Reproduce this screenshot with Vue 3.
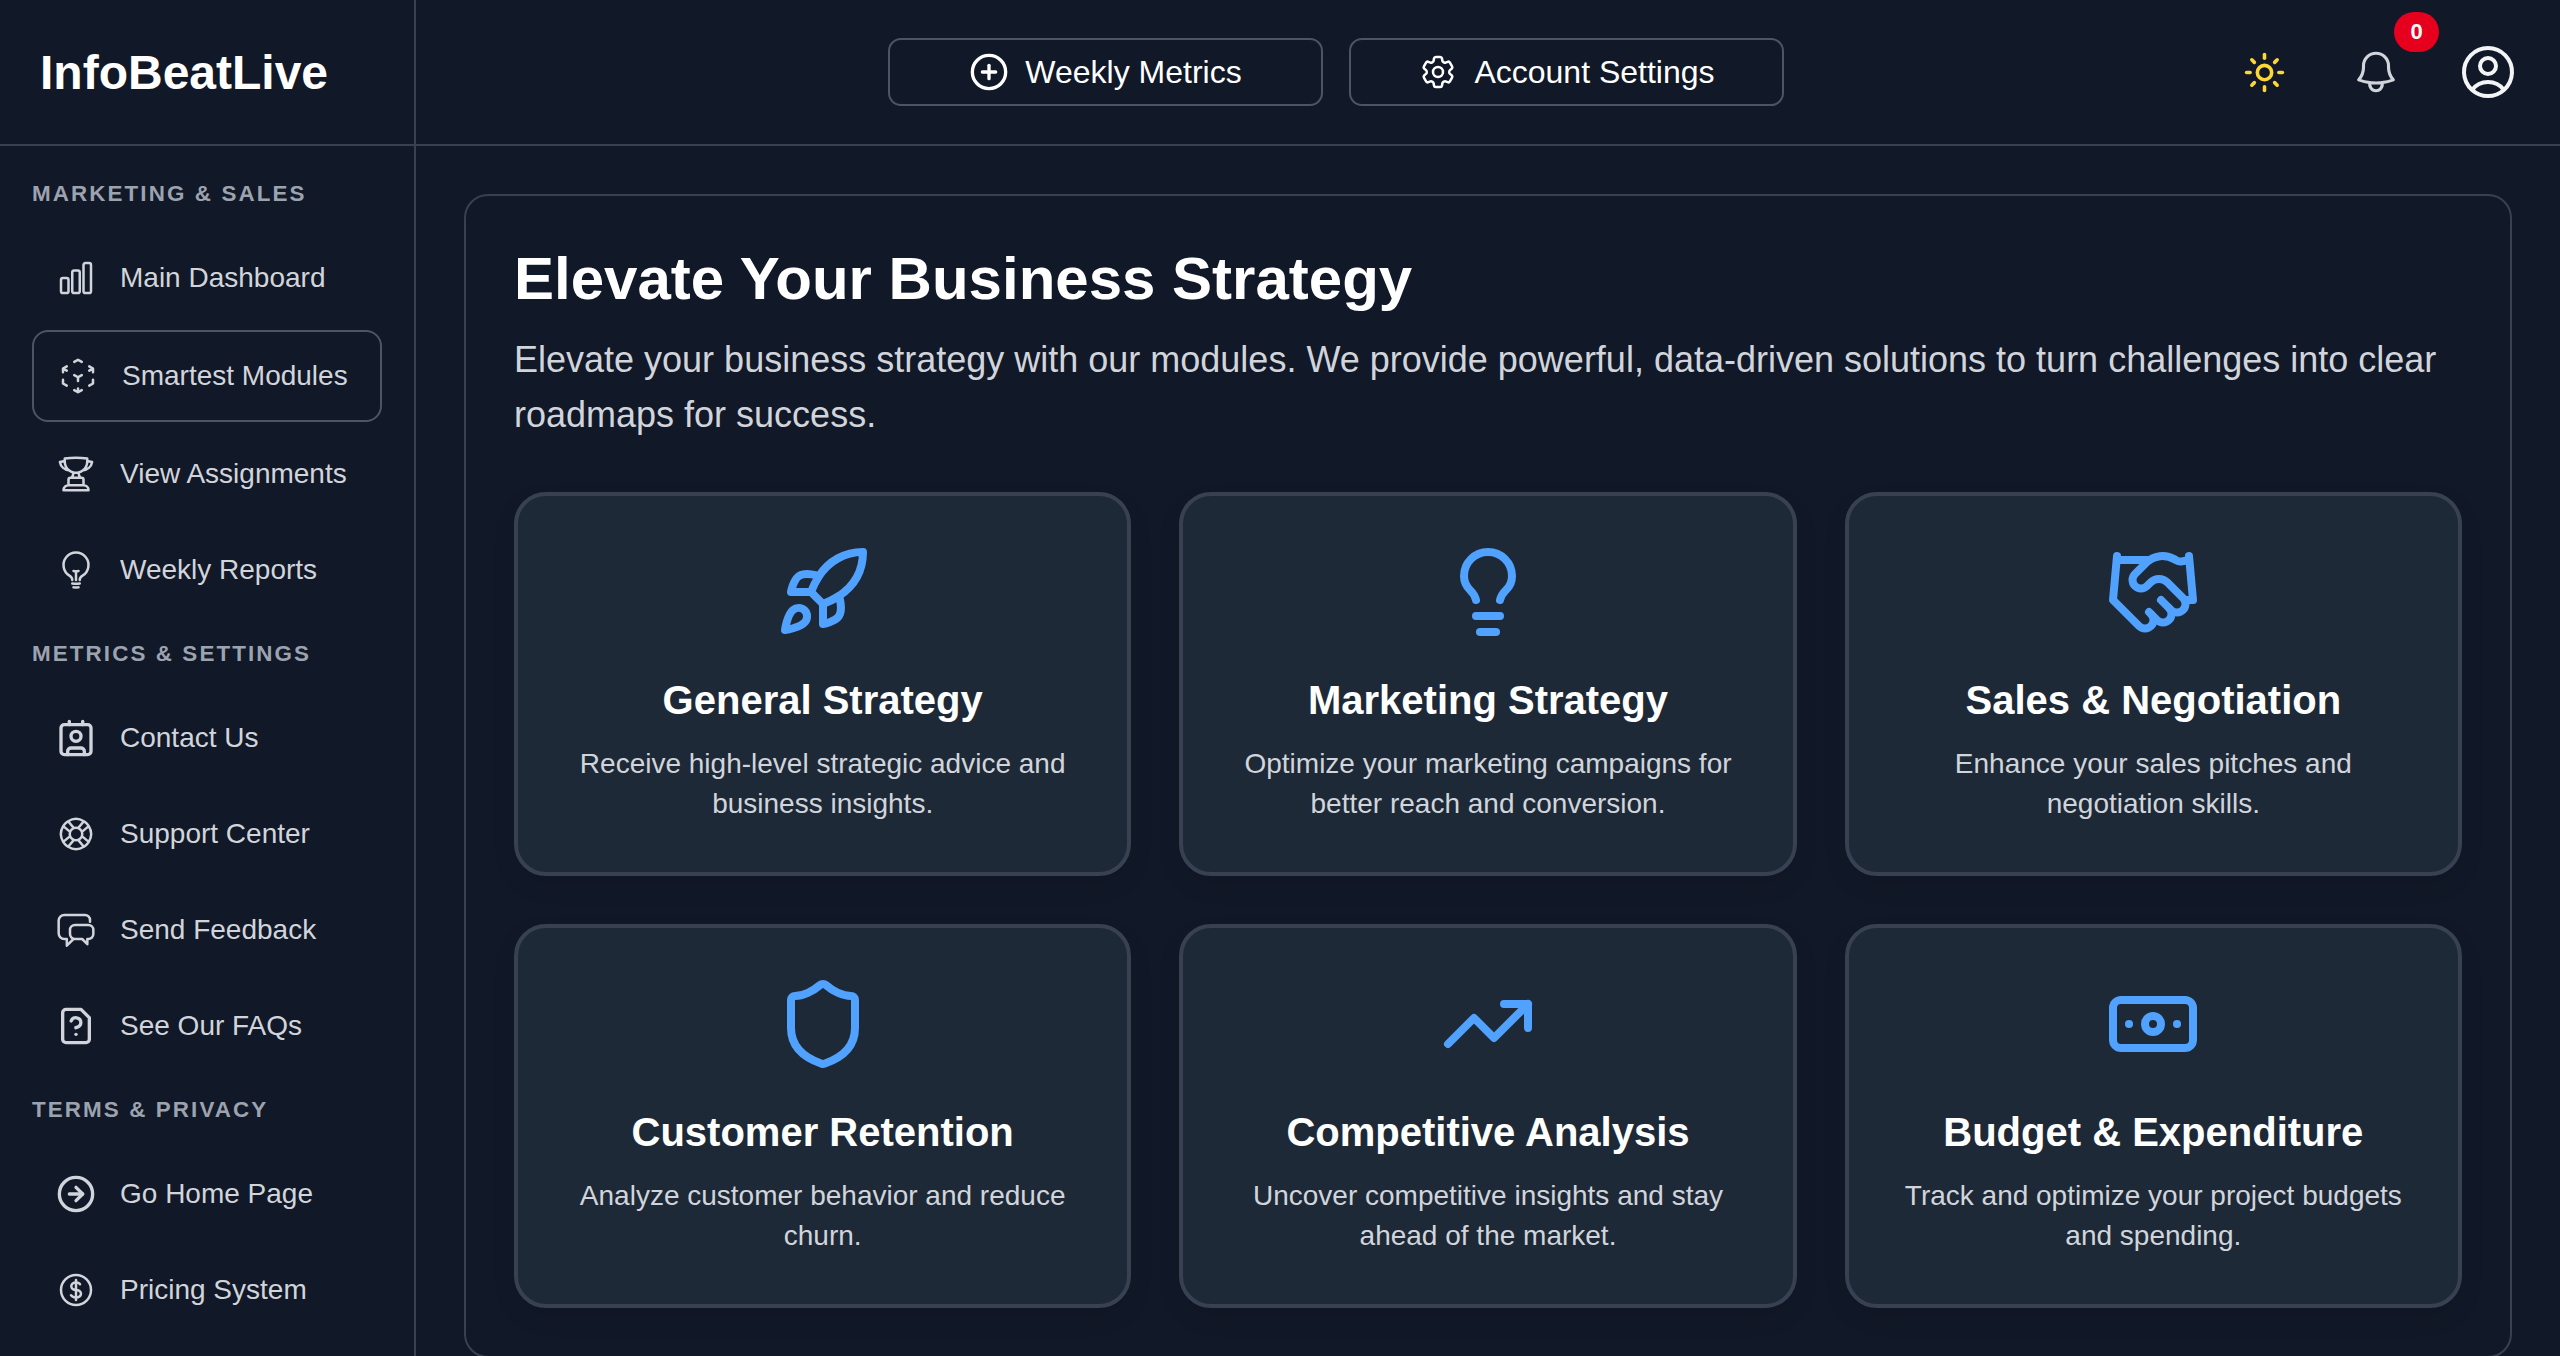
<script setup>
import { h } from 'vue'

const circle = (cx, cy, r) => `M${cx - r} ${cy}a${r} ${r} 0 1 0 ${r * 2} 0a${r} ${r} 0 1 0 ${-r * 2} 0z`

const icons = {
  chart: ['M3 13.125C3 12.504 3.504 12 4.125 12h2.25c.621 0 1.125.504 1.125 1.125v6.75C7.5 20.496 6.996 21 6.375 21h-2.25A1.125 1.125 0 0 1 3 19.875v-6.75ZM9.75 8.625c0-.621.504-1.125 1.125-1.125h2.25c.621 0 1.125.504 1.125 1.125v11.25c0 .621-.504 1.125-1.125 1.125h-2.25a1.125 1.125 0 0 1-1.125-1.125V8.625ZM16.5 4.125c0-.621.504-1.125 1.125-1.125h2.25C20.496 3 21 3.504 21 4.125v15.75c0 .621-.504 1.125-1.125 1.125h-2.25a1.125 1.125 0 0 1-1.125-1.125V4.125Z'],
  cube: ['m21 7.5-2.25-1.313M21 7.5v2.25m0-2.25-2.25 1.313M3 7.5l2.25-1.313M3 7.5l2.25 1.313M3 7.5v2.25m9 3 2.25-1.313M12 12.75l-2.25-1.313M12 12.75V15m0 6.75 2.25-1.313M12 21.75V19.5m0 2.25-2.25-1.313m0-16.875L12 2.25l2.25 1.313M21 14.25v2.25l-2.25 1.313m-13.5 0L3 16.5v-2.25'],
  trophy: ['M16.5 18.75h-9m9 0a3 3 0 0 1 3 3h-15a3 3 0 0 1 3-3m9 0v-3.375c0-.621-.503-1.125-1.125-1.125h-.871M7.5 18.75v-3.375c0-.621.504-1.125 1.125-1.125h.872m5.007 0H9.497m5.007 0a7.454 7.454 0 0 1-.982-3.172M9.497 14.25a7.454 7.454 0 0 0 .981-3.172M5.25 4.236c-.982.143-1.954.317-2.916.52A6.003 6.003 0 0 0 7.73 9.728M5.25 4.236V4.5c0 2.108.966 3.99 2.48 5.228M5.25 4.236V2.721C7.456 2.41 9.71 2.25 12 2.25c2.291 0 4.545.16 6.75.47v1.516M7.73 9.728a6.726 6.726 0 0 0 2.748 1.35m8.272-6.842V4.5c0 2.108-.966 3.99-2.48 5.228m2.48-5.492a46.32 46.32 0 0 1 2.916.52 6.003 6.003 0 0 1-5.395 4.972m0 0a6.726 6.726 0 0 1-2.749 1.35m0 0a6.772 6.772 0 0 1-3.044 0'],
  bulbHero: ['M12 18v-5.25m0 0a6.01 6.01 0 0 0 1.5-.189m-1.5.189a6.01 6.01 0 0 1-1.5-.189m3.75 7.478a12.06 12.06 0 0 1-4.5 0m3.75 2.383a14.406 14.406 0 0 1-3 0M14.25 18v-.192c0-.983.658-1.823 1.508-2.316a7.5 7.5 0 1 0-7.517 0c.85.493 1.509 1.333 1.509 2.316V18'],
  contact: ['M16 2v2', 'M7 22v-2a2 2 0 0 1 2-2h6a2 2 0 0 1 2 2v2', 'M8 2v2', circle(12, 11, 3), 'M5 4h14a2 2 0 0 1 2 2v14a2 2 0 0 1-2 2H5a2 2 0 0 1-2-2V6a2 2 0 0 1 2-2z'],
  buoy: ['M16.712 4.33a9.027 9.027 0 0 1 1.652 1.306c.51.51.944 1.064 1.306 1.652M16.712 4.33l-3.448 4.138m3.448-4.138a9.014 9.014 0 0 0-9.424 0M19.67 7.288l-4.138 3.448m4.138-3.448a9.014 9.014 0 0 1 0 9.424m-4.138-5.976a3.736 3.736 0 0 0-.88-1.388 3.737 3.737 0 0 0-1.388-.88m2.268 2.268a3.765 3.765 0 0 1 0 2.528m-2.268-4.796a3.765 3.765 0 0 0-2.528 0m4.796 4.796c-.181.506-.475.982-.88 1.388a3.736 3.736 0 0 1-1.388.88m2.268-2.268 4.138 3.448m0 0a9.027 9.027 0 0 1-1.306 1.652c-.51.51-1.064.944-1.652 1.306m0 0-3.448-4.138m3.448 4.138a9.014 9.014 0 0 1-9.424 0m5.976-4.138a3.765 3.765 0 0 1-2.528 0m0 0a3.736 3.736 0 0 1-1.388-.88 3.737 3.737 0 0 1-.88-1.388m2.268 2.268L7.288 19.67m0 0a9.024 9.024 0 0 1-1.652-1.306 9.027 9.027 0 0 1-1.306-1.652m0 0 4.138-3.448M4.33 16.712a9.014 9.014 0 0 1 0-9.424m4.138 5.976a3.765 3.765 0 0 1 0-2.528m0 0c.181-.506.475-.982.88-1.388a3.736 3.736 0 0 1 1.388-.88m-2.268 2.268L4.33 7.288m6.406 1.18L7.288 4.33m0 0a9.024 9.024 0 0 0-1.652 1.306A9.025 9.025 0 0 0 4.33 7.288'],
  chat: ['M20.4 7V6a3 3 0 0 0-3-3H5a3.4 3.4 0 0 0-3.4 3.4v7.6A3.4 3.4 0 0 0 5 17.4h1.5v4l4-4', 'M11.4 9h8a3 3 0 0 1 3 3v2.4a3 3 0 0 1-3 3h-.6v3.1l-3.1-3.1h-4.3a3 3 0 0 1-3-3V12a3 3 0 0 1 3-3z'],
  fileQuestion: ['M12 17h.01', 'M15 2H6a2 2 0 0 0-2 2v16a2 2 0 0 0 2 2h12a2 2 0 0 0 2-2V7z', 'M9.1 9a3 3 0 0 1 5.82 1c0 2-3 3-3 3'],
  arrowRight: [circle(12, 12, 10), 'M8 12h8', 'm12 16 4-4-4-4'],
  dollar: ['M12 6v12m-3-2.818.879.659c1.171.879 3.07.879 4.242 0 1.172-.879 1.172-2.303 0-3.182C13.536 12.219 12.768 12 12 12c-.725 0-1.45-.22-2.003-.659-1.106-.879-1.106-2.303 0-3.182s2.9-.879 4.006 0l.415.33M21 12a9 9 0 1 1-18 0 9 9 0 0 1 18 0Z'],
  plus: [circle(12, 12, 10), 'M8 12h8', 'M12 8v8'],
  settings: ['M9.594 3.94c.09-.542.56-.94 1.11-.94h2.593c.55 0 1.02.398 1.11.94l.213 1.281c.063.374.313.686.645.87.074.04.147.083.22.127.325.196.72.257 1.075.124l1.217-.456a1.125 1.125 0 0 1 1.37.49l1.296 2.247a1.125 1.125 0 0 1-.26 1.431l-1.003.827c-.293.241-.438.613-.43.992a7.723 7.723 0 0 1 0 .255c-.008.378.137.75.43.991l1.004.827c.424.35.534.955.26 1.43l-1.298 2.247a1.125 1.125 0 0 1-1.369.491l-1.217-.456c-.355-.133-.75-.072-1.076.124a6.47 6.47 0 0 1-.22.128c-.331.183-.581.495-.644.869l-.213 1.281c-.09.543-.56.94-1.11.94h-2.594c-.55 0-1.019-.398-1.11-.94l-.213-1.281c-.062-.374-.312-.686-.644-.87a6.52 6.52 0 0 1-.22-.127c-.325-.196-.72-.257-1.076-.124l-1.217.456a1.125 1.125 0 0 1-1.369-.49l-1.297-2.247a1.125 1.125 0 0 1 .26-1.431l1.004-.827c.292-.24.437-.613.43-.991a6.932 6.932 0 0 1 0-.255c.007-.38-.138-.751-.43-.992l-1.004-.827a1.125 1.125 0 0 1-.26-1.43l1.297-2.247a1.125 1.125 0 0 1 1.37-.491l1.216.456c.356.133.751.072 1.076-.124.072-.044.146-.086.22-.128.332-.183.582-.495.644-.869l.214-1.28Z', 'M15 12a3 3 0 1 1-6 0 3 3 0 0 1 6 0Z'],
  sun: [circle(12, 12, 4), 'M12 2v2', 'M12 20v2', 'm4.93 4.93 1.41 1.41', 'm17.66 17.66 1.41 1.41', 'M2 12h2', 'M20 12h2', 'm6.34 17.66-1.41 1.41', 'm19.07 4.93-1.41 1.41'],
  bell: ['M14.857 17.082a23.848 23.848 0 0 0 5.454-1.31A8.967 8.967 0 0 1 18 9.75V9A6 6 0 0 0 6 9v.75a8.967 8.967 0 0 1-2.312 6.022c1.733.64 3.56 1.085 5.455 1.31m5.714 0a24.255 24.255 0 0 1-5.714 0m5.714 0a3 3 0 1 1-5.714 0'],
  user: ['M17.982 18.725A7.488 7.488 0 0 0 12 15.75a7.488 7.488 0 0 0-5.982 2.975m11.963 0a9 9 0 1 0-11.963 0m11.963 0A8.966 8.966 0 0 1 12 21a8.966 8.966 0 0 1-5.982-2.275M15 9.75a3 3 0 1 1-6 0 3 3 0 0 1 6 0Z'],
  rocket: ['M4.5 16.5c-1.5 1.26-2 5-2 5s3.74-.5 5-2c.71-.84.7-2.13-.09-2.91a2.18 2.18 0 0 0-2.91-.09z', 'm12 15-3-3a22 22 0 0 1 2-3.95A12.88 12.88 0 0 1 22 2c0 2.72-.78 7.5-6 11a22.35 22.35 0 0 1-4 2z', 'M9 12H4s.55-3.03 2-4c1.62-1.08 5 0 5 0', 'M12 15v5s3.03-.55 4-2c1.08-1.62 0-5 0-5'],
  bulb: ['M15 14c.2-1 .7-1.7 1.5-2.5 1-.9 1.5-2.2 1.5-3.5A6 6 0 0 0 6 8c0 1 .2 2.2 1.5 3.5.7.7 1.3 1.5 1.5 2.5', 'M9 18h6', 'M10 22h4'],
  handshake: ['m11 17 2 2a1 1 0 1 0 3-3', 'm14 14 2.5 2.5a1 1 0 1 0 3-3l-3.88-3.88a3 3 0 0 0-4.24 0l-.88.88a1 1 0 1 1-3-3l2.81-2.81a5.79 5.79 0 0 1 7.06-.87l.47.28a2 2 0 0 0 1.42.25L21 4', 'm21 3 1 11h-2', 'M3 3 2 14l6.5 6.5a1 1 0 1 0 3-3', 'M3 4h8'],
  shield: ['M20 13c0 5-3.5 7.5-7.66 8.95a1 1 0 0 1-.67-.01C7.5 20.5 4 18 4 13V6a1 1 0 0 1 1-1c2 0 4.5-1.2 6.24-2.72a1.17 1.17 0 0 1 1.52 0C14.51 3.81 17 5 19 5a1 1 0 0 1 1 1z'],
  trend: ['M16 7h6v6', 'm22 7-8.5 8.5-5-5L2 17'],
  banknote: ['M4 6h16a2 2 0 0 1 2 2v8a2 2 0 0 1-2 2H4a2 2 0 0 1-2-2V8a2 2 0 0 1 2-2z', circle(12, 12, 2), 'M6 12h.01', 'M18 12h.01'],
}

// thin outline set draws at 1.5, the rest at 2
const thin = ['chart', 'cube', 'trophy', 'bulbHero', 'buoy', 'chat', 'dollar', 'settings', 'bell', 'user']

const Icon = (props) =>
  h(
    'svg',
    {
      viewBox: '0 0 24 24',
      fill: 'none',
      stroke: 'currentColor',
      'stroke-width': thin.includes(props.name) ? 1.5 : 2,
      'stroke-linecap': 'round',
      'stroke-linejoin': 'round',
    },
    icons[props.name].map((d) => h('path', { d })),
  )
Icon.props = ['name']

const sections = [
  {
    title: 'Marketing & Sales',
    items: [
      { label: 'Main Dashboard', icon: 'chart' },
      { label: 'Smartest Modules', icon: 'cube', active: true },
      { label: 'View Assignments', icon: 'trophy' },
      { label: 'Weekly Reports', icon: 'bulbHero' },
    ],
  },
  {
    title: 'Metrics & Settings',
    items: [
      { label: 'Contact Us', icon: 'contact' },
      { label: 'Support Center', icon: 'buoy' },
      { label: 'Send Feedback', icon: 'chat' },
      { label: 'See Our FAQs', icon: 'fileQuestion' },
    ],
  },
  {
    title: 'Terms & Privacy',
    items: [
      { label: 'Go Home Page', icon: 'arrowRight' },
      { label: 'Pricing System', icon: 'dollar' },
    ],
  },
]

const modules = [
  { title: 'General Strategy', text: 'Receive high-level strategic advice and business insights.', icon: 'rocket' },
  { title: 'Marketing Strategy', text: 'Optimize your marketing campaigns for better reach and conversion.', icon: 'bulb' },
  { title: 'Sales & Negotiation', text: 'Enhance your sales pitches and negotiation skills.', icon: 'handshake' },
  { title: 'Customer Retention', text: 'Analyze customer behavior and reduce churn.', icon: 'shield' },
  { title: 'Competitive Analysis', text: 'Uncover competitive insights and stay ahead of the market.', icon: 'trend' },
  { title: 'Budget & Expenditure', text: 'Track and optimize your project budgets and spending.', icon: 'banknote' },
]
</script>

<template>
  <div class="app">
    <header class="topbar">
      <div class="brand">InfoBeatLive</div>
      <div class="topbar-main">
        <div class="top-buttons">
          <button class="top-btn"><Icon name="plus" class="top-btn-icon" />Weekly Metrics</button>
          <button class="top-btn"><Icon name="settings" class="top-btn-icon" />Account Settings</button>
        </div>
        <div class="top-actions">
          <button class="action sun"><Icon name="sun" class="sun-icon" /></button>
          <button class="action bell">
            <Icon name="bell" class="bell-icon" />
            <span class="badge">0</span>
          </button>
          <button class="action user"><Icon name="user" class="user-icon" /></button>
        </div>
      </div>
    </header>

    <div class="body">
      <aside class="sidebar">
        <section v-for="section in sections" :key="section.title" class="nav-section">
          <h3 class="nav-title">{{ section.title }}</h3>
          <ul class="nav-list">
            <li
              v-for="item in section.items"
              :key="item.label"
              class="nav-item"
              :class="{ active: item.active }"
            >
              <Icon :name="item.icon" class="nav-icon" />
              <span>{{ item.label }}</span>
            </li>
          </ul>
        </section>
      </aside>

      <main class="content">
        <div class="panel">
          <h1 class="panel-title">Elevate Your Business Strategy</h1>
          <p class="panel-text">
            Elevate your business strategy with our modules. We provide powerful, data-driven solutions to turn challenges into clear roadmaps for success.
          </p>
          <div class="module-grid">
            <article v-for="mod in modules" :key="mod.title" class="module-card">
              <Icon :name="mod.icon" class="module-icon" />
              <h2 class="module-title">{{ mod.title }}</h2>
              <p class="module-text">{{ mod.text }}</p>
            </article>
          </div>
        </div>
      </main>
    </div>
  </div>
</template>

<style>
html,
body {
  margin: 0;
  height: 100%;
  overflow: hidden;
  background: #111827;
}
</style>

<style scoped>
.app {
  height: 1356px;
  display: flex;
  flex-direction: column;
  overflow: hidden;
  background: #111827;
  color: #fff;
  font-family: "Liberation Sans", Arial, sans-serif;
}

.topbar {
  flex: none;
  height: 146px;
  box-sizing: border-box;
  display: flex;
  border-bottom: 2px solid #374151;
}

.brand {
  flex: none;
  width: 416px;
  box-sizing: border-box;
  border-right: 2px solid #374151;
  padding-left: 40px;
  display: flex;
  align-items: center;
  font-size: 48px;
  font-weight: 700;
}

.topbar-main {
  flex: 1;
  display: flex;
  align-items: center;
  padding: 0 40px;
}

.top-buttons {
  flex: 1;
  display: flex;
  justify-content: center;
  gap: 26px;
}

.top-btn {
  width: 435px;
  height: 68px;
  box-sizing: border-box;
  display: flex;
  align-items: center;
  justify-content: center;
  gap: 16px;
  background: none;
  border: 2px solid #4b5563;
  border-radius: 13px;
  color: #fff;
  font: inherit;
  font-size: 32px;
}

.top-btn-icon {
  width: 40px;
  height: 40px;
}

.top-actions {
  display: flex;
  align-items: center;
  gap: 48px;
  padding-left: 16px;
}

.action {
  position: relative;
  width: 64px;
  height: 64px;
  padding: 0;
  display: flex;
  align-items: center;
  justify-content: center;
  background: none;
  border: none;
}

.sun {
  color: #fdd835;
}

.sun-icon {
  width: 43px;
  height: 43px;
}

.bell {
  color: #d1d5db;
}

.bell-icon {
  width: 50px;
  height: 50px;
}

.user {
  color: #f3f4f6;
}

.user-icon {
  width: 64px;
  height: 64px;
}

.badge {
  position: absolute;
  left: 50px;
  top: -28px;
  width: 45px;
  height: 40px;
  display: flex;
  align-items: center;
  justify-content: center;
  border-radius: 20px;
  background: #e7001e;
  color: #fff;
  font-family: "Liberation Sans", Arial, sans-serif;
  font-size: 22px;
  font-weight: 700;
}

.body {
  flex: 1;
  min-height: 0;
  display: flex;
}

.sidebar {
  flex: none;
  width: 416px;
  box-sizing: border-box;
  border-right: 2px solid #374151;
  padding: 32px 32px 0;
  overflow: hidden;
}

.nav-section {
  margin-bottom: 24px;
}

.nav-title {
  margin: 0 0 24px;
  color: #9ca3af;
  font-size: 22.4px;
  line-height: 32px;
  font-weight: 700;
  letter-spacing: 2.1px;
  text-transform: uppercase;
}

.nav-list {
  list-style: none;
  margin: 0;
  padding: 0;
  display: flex;
  flex-direction: column;
  gap: 8px;
}

.nav-item {
  height: 88px;
  padding: 0 24px;
  display: flex;
  align-items: center;
  gap: 24px;
  color: #d1d5db;
  font-size: 28px;
}

.nav-item.active {
  box-sizing: border-box;
  height: 92px;
  border: 2px solid #4b5563;
  border-radius: 16px;
}

.nav-icon {
  flex: none;
  width: 40px;
  height: 40px;
}

.content {
  flex: 1;
  min-width: 0;
  box-sizing: border-box;
  padding: 48px;
  overflow: hidden;
}

.panel {
  box-sizing: border-box;
  border: 2px solid #374151;
  border-radius: 24px;
  padding: 48px;
}

.panel-title {
  margin: 0 0 18px;
  font-size: 60px;
  line-height: 70px;
  font-weight: 700;
}

.panel-text {
  margin: 0 0 50px;
  color: #d1d5db;
  font-size: 36px;
  line-height: 55px;
}

.module-grid {
  display: grid;
  grid-template-columns: repeat(3, 1fr);
  gap: 48px;
}

.module-card {
  box-sizing: border-box;
  height: 384px;
  padding: 48px;
  display: flex;
  flex-direction: column;
  align-items: center;
  text-align: center;
  background: #1e2937;
  border: 4px solid #374151;
  border-radius: 32px;
  box-shadow: 0 10px 24px rgba(0, 0, 0, 0.08);
}

.module-icon {
  flex: none;
  width: 96px;
  height: 96px;
  color: #51a2ff;
}

.module-title {
  margin: 40px 0 24px;
  font-size: 40px;
  line-height: 40px;
  font-weight: 700;
}

.module-text {
  margin: 0;
  color: #d1d5db;
  font-size: 28px;
  line-height: 40px;
}
</style>
